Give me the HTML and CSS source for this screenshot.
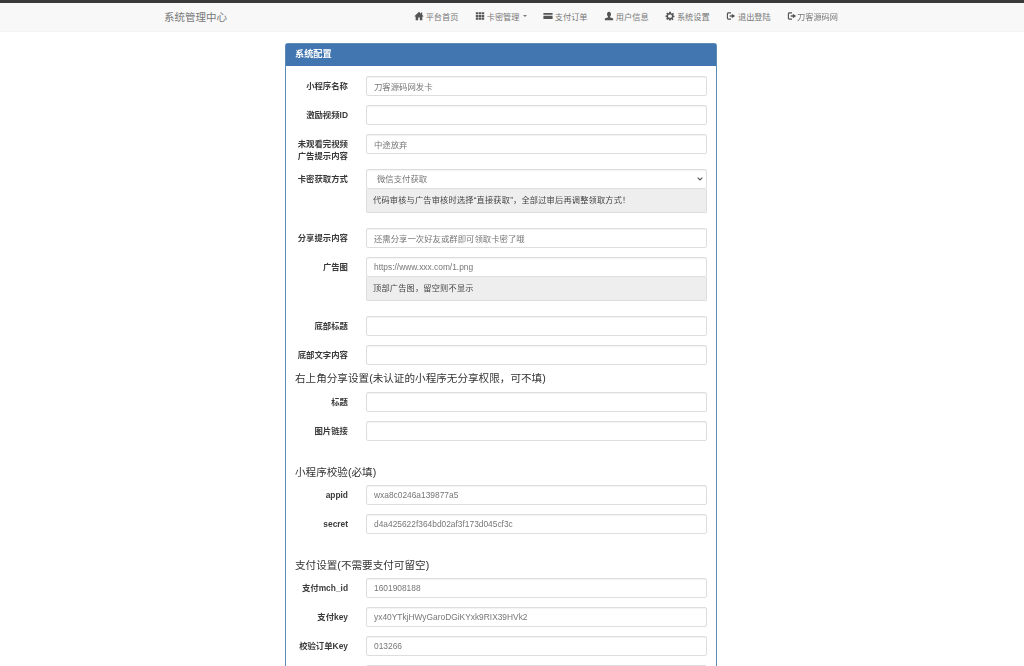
FILE: index.html
```html
<!DOCTYPE html>
<html lang="zh-CN">
<head>
    <meta charset="UTF-8">
    <meta name="viewport" content="width=device-width, initial-scale=1.0">
    <title>系统管理中心</title>
    <link rel="stylesheet" href="styles.css">
</head>
<body>
    <header class="navbar">
        <a class="brand" href="#">系统管理中心</a>
        <nav class="nav-links">
            <a href="#"><svg class="icon" viewBox="0 0 12 12"><path d="M6 1 0.5 6.2 1.3 7 2 6.4V11H5V7.8H7V11H10V6.4L10.7 7 11.5 6.2 9.8 4.6V1.8H8.4V3.3Z"/></svg>平台首页</a>
            <a href="#"><svg class="icon" viewBox="0 0 12 12"><path d="M1 1.5H4V4H1ZM4.6 1.5H7.4V4H4.6ZM8 1.5H11V4H8ZM1 4.7H4V7.2H1ZM4.6 4.7H7.4V7.2H4.6ZM8 4.7H11V7.2H8ZM1 7.9H4V10.5H1ZM4.6 7.9H7.4V10.5H4.6ZM8 7.9H11V10.5H8Z"/></svg>卡密管理<span class="caret"></span></a>
            <a href="#"><svg class="icon" viewBox="0 0 12 12"><path d="M0.5 2.5H11.5V4.6H0.5ZM0.5 5.6H11.5V9.5H0.5Z"/></svg>支付订单</a>
            <a href="#"><svg class="icon" viewBox="0 0 12 12"><path d="M6 1C7.5 1 8.4 2.2 8.4 3.8 8.4 5 7.9 6 7.2 6.6V7.4L11 9V11H1V9L4.8 7.4V6.6C4.1 6 3.6 5 3.6 3.8 3.6 2.2 4.5 1 6 1Z"/></svg>用户信息</a>
            <a href="#"><svg class="icon" viewBox="0 0 12 12"><path fill-rule="evenodd" d="M5 1H7L7.3 2.6 8.4 3.1 9.8 2.2 10.8 3.6 9.6 4.7 9.8 5.2 11.3 5.6V7.4L9.8 7.6 9.4 8.6 10.3 10 9 11 7.8 10 7 10.3 6.9 11.5H5.1L4.8 10.2 3.9 9.8 2.6 10.7 1.4 9.4 2.4 8.2 2 7.4 0.7 7.2V5.4L2.1 5.1 2.5 4.2 1.5 3 2.8 1.8 4 2.7 4.8 2.4ZM6 4.4A1.9 1.9 0 1 0 6 8.1 1.9 1.9 0 1 0 6 4.4Z"/></svg>系统设置</a>
            <a href="#"><svg class="icon" viewBox="0 0 12 12"><path d="M1 3.5C1 2.4 1.8 1.6 2.9 1.6H6V3H3.2C2.7 3 2.4 3.3 2.4 3.8V8.2C2.4 8.7 2.7 9 3.2 9H6V10.4H2.9C1.8 10.4 1 9.6 1 8.5ZM7 3.4 11 6 7 8.6V7H4.4V5H7Z"/></svg>退出登陆</a>
            <a class="tight" href="#"><svg class="icon" viewBox="0 0 12 12"><path d="M1 3.5C1 2.4 1.8 1.6 2.9 1.6H6V3H3.2C2.7 3 2.4 3.3 2.4 3.8V8.2C2.4 8.7 2.7 9 3.2 9H6V10.4H2.9C1.8 10.4 1 9.6 1 8.5ZM7 3.4 11 6 7 8.6V7H4.4V5H7Z"/></svg>刀客源码网</a>
        </nav>
    </header>

    <section class="panel">
        <div class="panel-heading">系统配置</div>
        <form class="panel-body">
            <div class="row">
                <label>小程序名称</label>
                <input type="text" value="刀客源码网发卡">
            </div>
            <div class="row">
                <label>激励视频ID</label>
                <input type="text">
            </div>
            <div class="row tall">
                <label>未观看完视频<br>广告提示内容</label>
                <input type="text" value="中途放弃">
            </div>
            <div class="row spaced">
                <label>卡密获取方式</label>
                <div class="group">
                    <select><option>微信支付获取</option></select>
                    <div class="addon">代码审核与广告审核时选择“直接获取”，全部过审后再调整领取方式！</div>
                </div>
            </div>
            <div class="row">
                <label>分享提示内容</label>
                <input type="text" value="还需分享一次好友或群即可领取卡密了哦">
            </div>
            <div class="row spaced">
                <label>广告图</label>
                <div class="group">
                    <input type="text" value="https://www.xxx.com/1.png">
                    <div class="addon">顶部广告图，留空则不显示</div>
                </div>
            </div>
            <div class="row">
                <label>底部标题</label>
                <input type="text">
            </div>
            <div class="row last">
                <label>底部文字内容</label>
                <input type="text">
            </div>

            <h4 class="first">右上角分享设置(未认证的小程序无分享权限，可不填)</h4>
            <div class="row">
                <label>标题</label>
                <input type="text">
            </div>
            <div class="row">
                <label>图片链接</label>
                <input type="text">
            </div>

            <h4>小程序校验(必填)</h4>
            <div class="row">
                <label>appid</label>
                <input type="text" value="wxa8c0246a139877a5">
            </div>
            <div class="row">
                <label>secret</label>
                <input type="text" value="d4a425622f364bd02af3f173d045cf3c">
            </div>

            <h4>支付设置(不需要支付可留空)</h4>
            <div class="row">
                <label>支付mch_id</label>
                <input type="text" value="1601908188">
            </div>
            <div class="row">
                <label>支付key</label>
                <input type="text" value="yx40YTkjHWyGaroDGiKYxk9RIX39HVk2">
            </div>
            <div class="row">
                <label>校验订单Key</label>
                <input type="text" value="013266">
            </div>
            <div class="row">
                <label></label>
                <input type="text">
            </div>
        </form>
    </section>
</body>
</html>
```

FILE: styles.css
```css
html, body {
    margin: 0;
    padding: 0;
    height: 666px;
    overflow: hidden;
}
body {
    background-color: #fff;
    color: #333;
    font-family: "Liberation Sans", "Noto Sans CJK SC", sans-serif;
    font-size: 8.4px;
    filter: blur(0.5px);
}
.navbar {
    display: flex;
    justify-content: space-between;
    align-items: center;
    height: 26px;
    padding: 0 186px 3px 164px;
    background-color: #f8f8f8;
    border-top: 3px solid #3a3a3a;
    box-shadow: inset 0 -1px 0 #f2f4f5;
}
.brand {
    color: #777;
    font-size: 10.5px;
    text-decoration: none;
}
.nav-links {
    display: flex;
    align-items: center;
    gap: 16.3px;
}
.nav-links a {
    display: flex;
    align-items: center;
    gap: 2px;
    color: #777;
    font-size: 8.2px;
    text-decoration: none;
}
.nav-links a.tight {
    gap: 0;
}
.icon {
    width: 10px;
    height: 10px;
    fill: #555;
}
.caret {
    width: 0;
    height: 0;
    margin-left: 1px;
    border-top: 2px solid #777;
    border-left: 2px solid transparent;
    border-right: 2px solid transparent;
}
.panel {
    width: 430px;
    margin: 11px 0 0 285px;
    border: 1px solid #5f8bb8;
    border-bottom: 0;
    border-radius: 3px 3px 0 0;
}
.panel-heading {
    height: 22px;
    line-height: 21px;
    padding-left: 9px;
    background-color: #4276b0;
    color: #fff;
    font-weight: bold;
    font-size: 9.2px;
}
.panel-body {
    padding: 10px 9px 0;
}
.row {
    display: grid;
    grid-template-columns: 53px 341px;
    column-gap: 18px;
    margin-bottom: 9px;
}
.row.tall {
    margin-bottom: 7px;
}
.row.spaced {
    margin-bottom: 15px;
}
.row.last {
    margin-bottom: 0;
}
label {
    padding-top: 4px;
    font-weight: bold;
    line-height: 12px;
    text-align: right;
    color: #3a3a3a;
    white-space: nowrap;
}
input, select {
    display: block;
    box-sizing: border-box;
    width: 100%;
    height: 20px;
    padding: 0 7px 1px;
    background-color: #fff;
    border: 1px solid #ddd;
    border-radius: 2px;
    box-shadow: inset 0 1px 1px rgba(0, 0, 0, 0.05);
    color: #777;
    font-family: inherit;
    font-size: 8.4px;
}
select {
    appearance: none;
    padding: 0 10px 1px;
    background-image: url("data:image/svg+xml,%3Csvg xmlns='http://www.w3.org/2000/svg' width='6' height='4'%3E%3Cpath d='M.7.7 3 3 5.3.7' fill='none' stroke='%23555' stroke-width='1.2'/%3E%3C/svg%3E");
    background-repeat: no-repeat;
    background-position: right 3px center;
}
.addon {
    height: 24px;
    line-height: 23px;
    box-sizing: border-box;
    padding: 0 6px;
    background-color: #eee;
    border: 1px solid #ddd;
    border-top: 0;
    border-radius: 0 0 2px 2px;
    color: #444;
    font-size: 8.2px;
    letter-spacing: 0.2px;
}
h4 {
    margin: 25px 0 6px 0;
    font-size: 10.6px;
    font-weight: normal;
    line-height: 13px;
    color: #333;
}
h4.first {
    margin-top: 7px;
    margin-bottom: 7px;
}
```
